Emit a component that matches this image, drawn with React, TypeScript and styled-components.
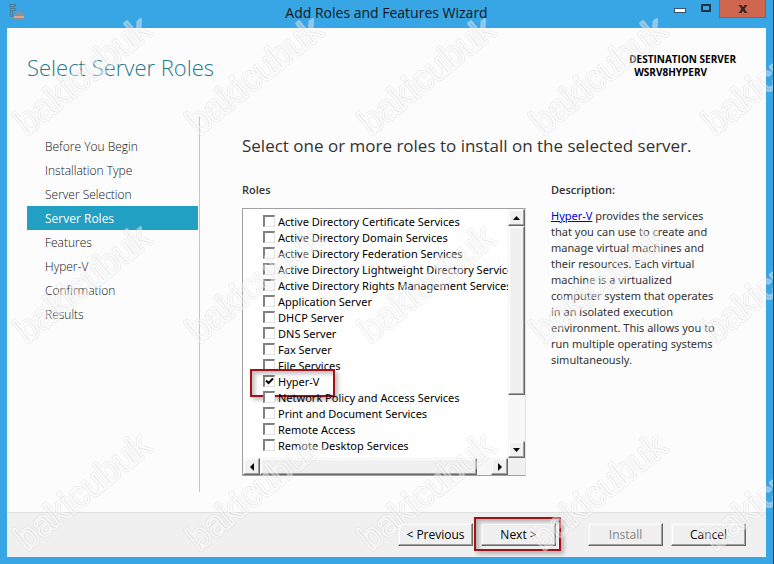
import React from "react";
import styled, { createGlobalStyle, css } from "styled-components";

const GlobalStyle = createGlobalStyle`
  *, *::before, *::after { box-sizing: border-box; }
  body {
    margin: 0;
    background: #38a5e5;
    color: #333;
    font-family: "Open Sans", "Noto Sans", sans-serif;
    font-size: 11px;
    line-height: 16px;
  }
  h1, h2, h3, p, ul { margin: 0; padding: 0; }
  ul { list-style: none; }
`;

const Window = styled.div`
  position: relative;
  display: flex;
  flex-direction: column;
  min-height: 100vh;
  padding: 0 7px 7px;
  background: #38a5e5;
  border-right: 1px solid #17405c;
  border-bottom: 1px solid #17405c;
`;

const TitleBar = styled.header`
  display: grid;
  grid-template-columns: 99px 1fr 99px;
  height: 28px;
`;

const AppIcon = styled.svg`
  margin: 4px 0 0 2px;
`;

const WindowTitle = styled.h1`
  color: #101820;
  font-size: 14px;
  font-weight: 400;
  line-height: 26px;
  text-align: center;
  white-space: nowrap;
`;

const WindowControls = styled.div`
  display: flex;
  align-items: flex-start;
`;

const ControlButton = styled.button<{ $close?: boolean }>`
  display: flex;
  flex: ${(p) => (p.$close ? "0 0 47px" : "1")};
  align-items: center;
  justify-content: center;
  height: 18px;
  padding: 0;
  border: 0;
  background: transparent;
  ${(p) =>
    p.$close &&
    css`
      background: #cf6650;
      border: solid #a5544b;
      border-width: 0 1px 1px;
    `}
`;

const Page = styled.main`
  display: flex;
  flex: 1;
  flex-direction: column;
  background: #fcfcfc;
`;

const PageHeader = styled.div`
  display: flex;
  justify-content: space-between;
  height: 89px;
  padding: 23px 30px 0 20px;
`;

const PageTitle = styled.h2`
  color: #26788f;
  font-size: 22px;
  font-weight: 300;
  line-height: 32px;
`;

const Destination = styled.div`
  padding-top: 2px;
  color: #000;
  font-size: 10px;
  font-weight: 700;
  line-height: 13px;
  white-space: nowrap;
`;

const ServerName = styled.div`
  padding-left: 5px;
`;

const Body = styled.div`
  display: flex;
  flex: 1;
  padding: 0 40px 20px 20px;
`;

const Nav = styled.nav`
  flex: 0 0 173px;
  padding: 17px 1px 0 0;
  border-right: 1px solid #c4c4c4;
`;

const NavLink = styled.a<{ $active?: boolean }>`
  display: block;
  height: 24px;
  padding: 1px 0 0 18px;
  background: ${(p) => (p.$active ? "#21a0c4" : "transparent")};
  color: ${(p) => (p.$active ? "#fff" : "#111")};
  font-size: 12px;
  font-weight: ${(p) => (p.$active ? 400 : 300)};
  line-height: 24px;
  text-decoration: none;
`;

const Content = styled.div`
  flex: 1;
  min-width: 0;
  padding: 17px 0 16px 42px;
`;

const Prompt = styled.h3`
  margin-bottom: 24px;
  font-size: 17px;
  font-weight: 400;
  line-height: 24px;
  white-space: nowrap;
`;

const Columns = styled.div`
  display: grid;
  grid-template-columns: minmax(0, 284fr) minmax(0, 175fr);
  column-gap: 25px;
`;

const ColumnLabel = styled.div`
  margin-bottom: 10px;
  font-weight: 600;
`;

const ListBox = styled.div`
  display: grid;
  grid-template-columns: minmax(0, 1fr) 17px;
  grid-template-rows: auto 17px;
  border: 1px solid #a0a0a0;
  border-right-color: #e3e3e3;
  background: #fff;
`;

const RoleList = styled.ul`
  padding: 5px 0 4px 20px;
  overflow: hidden;
`;

const RoleRow = styled.li`
  position: relative;
  height: 16px;
`;

const RoleLabel = styled.label`
  display: flex;
  gap: 3px;
  color: #000;
  font-family: "Noto Sans", "Open Sans", sans-serif;
  white-space: nowrap;
`;

const CheckBox = styled.input`
  flex: none;
  width: 12px;
  height: 12px;
  margin: 1px 0 0;
  appearance: none;
  border: 1px solid #e3e3e3;
  border-top: 2px solid #808080;
  border-left: 2px solid #808080;
  background: #fff;

  &:checked {
    background: #fff
      url("data:image/svg+xml,%3Csvg xmlns='http://www.w3.org/2000/svg' viewBox='0 0 9 9'%3E%3Cpath d='M1 3.5L3.5 6L8 1.5' fill='none' stroke='%23000' stroke-width='2'/%3E%3C/svg%3E")
      center / 9px 9px no-repeat;
  }
`;

const Highlight = styled.span<{ $inset: string }>`
  position: absolute;
  inset: ${(p) => p.$inset};
  border: 2px solid #a01217;
  box-shadow: 3px 3px 4px rgba(0, 0, 0, 0.25), inset 3px 3px 4px rgba(0, 0, 0, 0.25);
  pointer-events: none;
`;

const ScrollBar = styled.div<{ $horizontal?: boolean }>`
  display: flex;
  flex-direction: ${(p) => (p.$horizontal ? "row" : "column")};
  background: #f7f7f7;
`;

const raised = css`
  border: 1px solid;
  border-color: #f4f4f4 #696969 #696969 #f4f4f4;
  background: #f0f0f0;
  box-shadow: inset -1px -1px #a0a0a0, inset 1px 1px #fff;
`;

const ScrollButton = styled.button`
  ${raised}
  display: flex;
  flex: 0 0 17px;
  align-items: center;
  justify-content: center;
  padding: 0;
`;

const ScrollThumb = styled.div<{ $share: number }>`
  ${raised}
  flex: 0 1 ${(p) => p.$share}%;
`;

const ScrollSpace = styled.div`
  flex: 1;
`;

const ScrollCorner = styled.div`
  background: #f0f0f0;
`;

const Description = styled.p`
  padding-right: 5px;
  font-family: "Noto Sans", "Open Sans", sans-serif;
`;

const DocLink = styled.a`
  color: #0000e0;
`;

const Footer = styled.footer`
  display: flex;
  justify-content: flex-end;
  padding: 10px 20px 11px;
  border-top: 1px solid #dfdfdf;
  background: #f0f0f0;
`;

const ButtonSlot = styled.div<{ $before?: number }>`
  position: relative;
  margin-left: ${(p) => p.$before ?? 8}px;
`;

const PushButton = styled.button`
  ${raised}
  display: block;
  width: 75px;
  height: 23px;
  padding: 0;
  color: #000;
  font: inherit;
  font-size: 12px;

  &:disabled {
    color: #838383;
  }
`;

const WatermarkLayer = styled.svg`
  position: absolute;
  inset: 0;
  width: 100%;
  height: 100%;
  pointer-events: none;
`;

const steps = [
  "Before You Begin",
  "Installation Type",
  "Server Selection",
  "Server Roles",
  "Features",
  "Hyper-V",
  "Confirmation",
  "Results",
];

const roles = [
  "Active Directory Certificate Services",
  "Active Directory Domain Services",
  "Active Directory Federation Services",
  "Active Directory Lightweight Directory Services",
  "Active Directory Rights Management Services",
  "Application Server",
  "DHCP Server",
  "DNS Server",
  "Fax Server",
  "File Services",
  "Hyper-V",
  "Network Policy and Access Services",
  "Print and Document Services",
  "Remote Access",
  "Remote Desktop Services",
];

const arrows = {
  up: "M0 6L3.5 2L7 6Z",
  down: "M0 2L3.5 6L7 2Z",
  left: "M6 0L2 4L6 8Z",
  right: "M2 0L6 4L2 8Z",
};

function ArrowButton({ direction }: { direction: keyof typeof arrows }) {
  return (
    <ScrollButton type="button" aria-label={`Scroll ${direction}`}>
      <svg width="8" height="8" viewBox="0 0 8 8">
        <path d={arrows[direction]} fill="#000" />
      </svg>
    </ScrollButton>
  );
}

function Watermark() {
  const text = {
    x: 0,
    y: 0,
    fontFamily: '"Liberation Sans", Arial, sans-serif',
    fontSize: 36,
    fill: "none",
    strokeLinejoin: "round" as const,
    transform: "translate(27 136) rotate(-39)",
  };
  return (
    <WatermarkLayer aria-hidden="true">
      <defs>
        <pattern id="mark" width="172" height="208" patternUnits="userSpaceOnUse">
          <g opacity="0.45">
            <text {...text} stroke="#c6c6ca" strokeWidth="3">bakicubuk</text>
            <text {...text} stroke="#fcfcfc" strokeWidth="2">bakicubuk</text>
          </g>
        </pattern>
      </defs>
      <rect width="100%" height="100%" fill="url(#mark)" />
    </WatermarkLayer>
  );
}

export default function App() {
  return (
    <>
      <GlobalStyle />
      <Window>
        <TitleBar>
          <AppIcon width="17" height="17" viewBox="0 0 17 17">
            <path d="M0.500 0.500h6v2h-6zM1.500 4.500h5v2H3.500v6h-2z" fill="#45a3d6" stroke="#4b7c98" strokeWidth="1" />
            <path d="M8 7l6 1v3H6V9z" fill="#7d97a8" />
            <path d="M5 11h10v4H5z" fill="#8f8f94" />
            <path d="M5 12h10v2H5z" fill="#dca58c" />
          </AppIcon>
          <WindowTitle>Add Roles and Features Wizard</WindowTitle>
          <WindowControls>
            <ControlButton type="button" aria-label="Minimize">
              <svg width="12" height="12" viewBox="0 0 12 12">
                <rect x="0.500" y="5.500" width="11" height="4" fill="#fff" stroke="#35536a" />
              </svg>
            </ControlButton>
            <ControlButton type="button" aria-label="Maximize">
              <svg width="12" height="12" viewBox="0 0 12 12">
                <rect x="2" y="2" width="8" height="6" fill="none" stroke="#1f3340" strokeWidth="2" />
              </svg>
            </ControlButton>
            <ControlButton type="button" aria-label="Close" $close>
              <svg width="10" height="10" viewBox="0 0 10 10">
                <path d="M0.500 1h3L5 3.200L6.500 1h3L6.500 5L9.500 9h-3L5 6.800L3.500 9h-3L3.500 5z" fill="#3a2725" />
              </svg>
            </ControlButton>
          </WindowControls>
        </TitleBar>

        <Page>
          <PageHeader>
            <PageTitle>Select Server Roles</PageTitle>
            <Destination>
              DESTINATION SERVER
              <ServerName>WSRV8HYPERV</ServerName>
            </Destination>
          </PageHeader>

          <Body>
            <Nav>
              <ul>
                {steps.map((step) => (
                  <li key={step}>
                    <NavLink href="#" $active={step === "Server Roles"}>
                      {step}
                    </NavLink>
                  </li>
                ))}
              </ul>
            </Nav>

            <Content>
              <Prompt>Select one or more roles to install on the selected server.</Prompt>
              <Columns>
                <section>
                  <ColumnLabel>Roles</ColumnLabel>
                  <ListBox>
                    <RoleList>
                      {roles.map((role) => (
                        <RoleRow key={role}>
                          <RoleLabel>
                            <CheckBox type="checkbox" defaultChecked={role === "Hyper-V"} />
                            {role}
                          </RoleLabel>
                          {role === "Hyper-V" && <Highlight $inset="-5px 173px -7px -13px" />}
                        </RoleRow>
                      ))}
                    </RoleList>
                    <ScrollBar>
                      <ArrowButton direction="up" />
                      <ScrollThumb $share={68} />
                      <ScrollSpace />
                      <ArrowButton direction="down" />
                    </ScrollBar>
                    <ScrollBar $horizontal>
                      <ArrowButton direction="left" />
                      <ScrollThumb $share={82} />
                      <ScrollSpace />
                      <ArrowButton direction="right" />
                    </ScrollBar>
                    <ScrollCorner />
                  </ListBox>
                </section>
                <section>
                  <ColumnLabel>Description:</ColumnLabel>
                  <Description>
                    <DocLink href="#">Hyper-V</DocLink> provides the services that you can use to
                    create and manage virtual machines and their resources. Each virtual machine is
                    a virtualized computer system that operates in an isolated execution
                    environment. This allows you to run multiple operating systems simultaneously.
                  </Description>
                </section>
              </Columns>
            </Content>
          </Body>
        </Page>

        <Footer>
          <ButtonSlot>
            <PushButton type="button">&lt; Previous</PushButton>
          </ButtonSlot>
          <ButtonSlot>
            <PushButton type="button">Next &gt;</PushButton>
            <Highlight $inset="-6px -5px -5px -7px" />
          </ButtonSlot>
          <ButtonSlot $before={32}>
            <PushButton type="button" disabled>Install</PushButton>
          </ButtonSlot>
          <ButtonSlot>
            <PushButton type="button">Cancel</PushButton>
          </ButtonSlot>
        </Footer>
        <Watermark />
      </Window>
    </>
  );
}
